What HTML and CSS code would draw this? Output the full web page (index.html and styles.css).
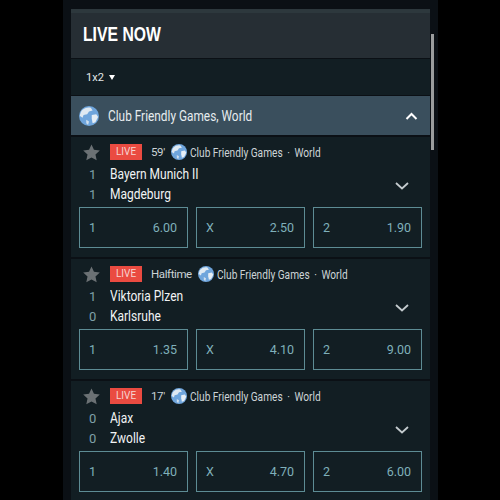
FILE: index.html
```html
<!DOCTYPE html>
<html lang="en">
<head>
    <meta charset="UTF-8">
    <title>Live now</title>
    <link rel="stylesheet" href="styles.css">
</head>
<body>
    <svg class="defs" width="0" height="0">
        <symbol id="globe" viewBox="0 0 22 22">
            <circle cx="11" cy="11" r="11" fill="#6fa5dc"/>
            <path d="M3 5c3-3 7-4 10-3l2 3-4 1-2 3-4 1-1 3-3-2c0-2 1-4 2-6z" fill="#dfe9f2"/>
            <path d="M14 10l5-1 2 3-3 6-3 1-1-5z" fill="#e6eef5"/>
            <path d="M8 15l3 2-1 4-2-2z" fill="#cfdfee"/>
        </symbol>
        <symbol id="star" viewBox="0 0 18 18">
            <path d="M9 0.5l2.6 5.7 6.2 0.7-4.6 4.2 1.3 6.1L9 14.2l-5.5 3 1.3-6.1L0.2 6.9l6.2-0.7z" fill="#6b7174"/>
        </symbol>
    </svg>

    <div class="page">
        <div class="panel">
            <h1 class="title"><span class="narrow">LIVE NOW</span></h1>
            <div class="filter"><span>1x2</span><span class="caret"></span></div>
            <div class="league">
                <svg class="globe-big"><use href="#globe"/></svg>
                <span class="league-name"><span class="narrow">Club Friendly Games, World</span></span>
                <svg class="chev-up" viewBox="0 0 12 8"><path d="M1 7l5-5 5 5" fill="none" stroke="#fff" stroke-width="2"/></svg>
            </div>

            <div class="event">
                <div class="meta">
                    <svg class="star"><use href="#star"/></svg>
                    <span class="live">LIVE</span>
                    <span class="time">59'</span>
                    <svg class="globe"><use href="#globe"/></svg>
                    <span class="narrow comp">Club Friendly Games &#8201;·&#8201; World</span>
                </div>
                <div class="teams">
                    <div class="team"><span class="score">1</span><span class="narrow">Bayern Munich II</span></div>
                    <div class="team"><span class="score">1</span><span class="narrow">Magdeburg</span></div>
                    <svg class="chev-down" viewBox="0 0 14 8"><path d="M1 1l6 5.5L13 1" fill="none" stroke="#c4cbce" stroke-width="1.8"/></svg>
                </div>
                <div class="odds">
                    <div class="odd"><span>1</span><span>6.00</span></div>
                    <div class="odd"><span>X</span><span>2.50</span></div>
                    <div class="odd"><span>2</span><span>1.90</span></div>
                </div>
            </div>

            <div class="event">
                <div class="meta">
                    <svg class="star"><use href="#star"/></svg>
                    <span class="live">LIVE</span>
                    <span class="time">Halftime</span>
                    <svg class="globe"><use href="#globe"/></svg>
                    <span class="narrow comp">Club Friendly Games &#8201;·&#8201; World</span>
                </div>
                <div class="teams">
                    <div class="team"><span class="score">1</span><span class="narrow">Viktoria Plzen</span></div>
                    <div class="team"><span class="score">0</span><span class="narrow">Karlsruhe</span></div>
                    <svg class="chev-down" viewBox="0 0 14 8"><path d="M1 1l6 5.5L13 1" fill="none" stroke="#c4cbce" stroke-width="1.8"/></svg>
                </div>
                <div class="odds">
                    <div class="odd"><span>1</span><span>1.35</span></div>
                    <div class="odd"><span>X</span><span>4.10</span></div>
                    <div class="odd"><span>2</span><span>9.00</span></div>
                </div>
            </div>

            <div class="event">
                <div class="meta">
                    <svg class="star"><use href="#star"/></svg>
                    <span class="live">LIVE</span>
                    <span class="time">17'</span>
                    <svg class="globe"><use href="#globe"/></svg>
                    <span class="narrow comp">Club Friendly Games &#8201;·&#8201; World</span>
                </div>
                <div class="teams">
                    <div class="team"><span class="score">0</span><span class="narrow">Ajax</span></div>
                    <div class="team"><span class="score">0</span><span class="narrow">Zwolle</span></div>
                    <svg class="chev-down" viewBox="0 0 14 8"><path d="M1 1l6 5.5L13 1" fill="none" stroke="#c4cbce" stroke-width="1.8"/></svg>
                </div>
                <div class="odds">
                    <div class="odd"><span>1</span><span>1.40</span></div>
                    <div class="odd"><span>X</span><span>4.70</span></div>
                    <div class="odd"><span>2</span><span>6.00</span></div>
                </div>
            </div>
        </div>
        <div class="scrollbar"><div class="thumb"></div></div>
    </div>
</body>
</html>
```

FILE: styles.css
```css
html, body {
    margin: 0;
    height: 500px;
    overflow: hidden;
    background: #000;
    font-family: "Roboto", "Liberation Sans", sans-serif;
}

.defs {
    position: absolute;
}

/* the site font is a condensed one, none is installed */
.narrow {
    display: inline-block;
    transform: scaleX(0.8);
    transform-origin: left center;
    white-space: nowrap;
}

/* column in the middle of the black page */
.page {
    width: 375px;
    height: 500px;
    margin-left: 63px;
    padding: 9px 0 0 8px;
    box-sizing: border-box;
    background: #0b1015;
    display: flex;
    overflow: hidden;
}

.panel {
    width: 359px;
    flex: none;
}

.title {
    margin: 0;
    height: 49px;
    padding-left: 12px;
    box-sizing: border-box;
    border-top: 4px solid #2d383d;
    background: #262e34;
    color: #fff;
    font: bold 21px/42px "Liberation Sans", sans-serif;
}

.title .narrow {
    transform: scaleX(0.75);
}

.filter {
    height: 36px;
    margin-top: 1px;
    padding-left: 15px;
    background: #121e23;
    color: #e4e8ea;
    font-size: 11px;
    display: flex;
    align-items: center;
    gap: 5px;
}

.caret {
    border-left: 3px solid transparent;
    border-right: 3px solid transparent;
    border-top: 5px solid #fff;
}

.league {
    height: 39px;
    margin-top: 1px;
    padding: 0 12px 0 8px;
    background: #3a4f5d;
    color: #e6ecef;
    font-size: 15px;
    display: flex;
    align-items: center;
}

.globe-big {
    width: 20px;
    height: 20px;
    margin-right: 9px;
}

.league-name {
    flex: 1;
}

.league-name .narrow {
    transform: scaleX(0.79);
}

.chev-up {
    width: 13px;
    height: 8px;
}

.event {
    height: 120px;
    margin-top: 2px;
    padding: 6px 8px 0;
    box-sizing: border-box;
    background: #121e23;
}

.meta {
    height: 18px;
    display: flex;
    align-items: center;
    color: #ccd3d6;
    font-size: 13px;
}

.meta .comp {
    transform: scaleX(0.78);
}

.star {
    width: 17px;
    height: 17px;
    margin: 0 10px 0 4px;
}

.live {
    width: 32px;
    height: 16px;
    margin-right: 9px;
    background: #ea4b41;
    color: #f6d5d2;
    font-size: 10px;
    line-height: 16px;
    text-align: center;
}

.time {
    margin-right: 6px;
    font-size: 11.5px;
    letter-spacing: -0.4px;
}

.globe {
    width: 16px;
    height: 16px;
    margin-right: 3px;
}

.teams {
    position: relative;
    margin-top: 3px;
    height: 41px;
}

.team {
    height: 20px;
    line-height: 21px;
    color: #f1f3f4;
    font-size: 15px;
    display: flex;
}

.score {
    width: 31px;
    padding-left: 10px;
    box-sizing: border-box;
    color: #7fa0a8;
    font-size: 13px;
}

.chev-down {
    position: absolute;
    right: 13px;
    top: 18px;
    width: 14px;
    height: 8px;
}

.odds {
    display: grid;
    grid-template-columns: repeat(3, 109px);
    gap: 8px;
    margin-top: 2px;
}

.odd {
    height: 41px;
    padding: 0 10px 0 9px;
    box-sizing: border-box;
    border: 1px solid #5d8c94;
    color: #7fb0ba;
    font-size: 12.5px;
    display: flex;
    align-items: center;
    justify-content: space-between;
}

.scrollbar {
    width: 8px;
    flex: none;
    padding-left: 1px;
}

.thumb {
    width: 3px;
    height: 116px;
    margin-top: 25px;
    background: #9a9c9d;
}
```
